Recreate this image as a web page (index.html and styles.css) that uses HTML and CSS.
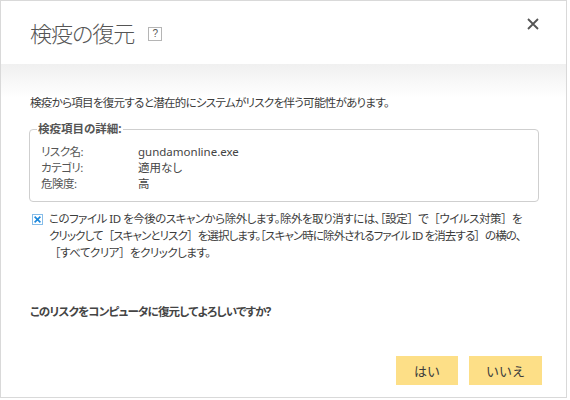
FILE: index.html
```html
<!DOCTYPE html>
<html lang="ja">
<head>
  <meta charset="UTF-8" />
  <title>検疫の復元</title>
  <link rel="stylesheet" href="styles.css">
</head>
<body>
  <div class="dialog">

    <!-- Header -->
    <div class="header">
      <h1 class="title">検疫の復元</h1>
      <span class="help">?</span>
      <button class="close" aria-label="閉じる">
        <svg width="12" height="12" viewBox="0 0 12 12">
          <path d="M1 1 L11 11 M11 1 L1 11" stroke="#555" stroke-width="1.8" fill="none"/>
        </svg>
      </button>
    </div>

    <!-- Body -->
    <div class="content">
      <p class="intro">検疫から項目を復元すると潜在的にシステムがリスクを伴う可能性があります。</p>

      <fieldset class="details">
        <legend>検疫項目の詳細:</legend>
        <div class="row"><span class="label">リスク名:</span><span class="value">gundamonline.exe</span></div>
        <div class="row"><span class="label">カテゴリ:</span><span class="value">適用なし</span></div>
        <div class="row"><span class="label">危険度:</span><span class="value">高</span></div>
      </fieldset>

      <div class="exclude">
        <span class="checkbox">
          <svg width="11" height="11" viewBox="0 0 11 11">
            <rect x="0.5" y="0.5" width="10" height="10" fill="#fff" stroke="#86bde9"/>
            <path d="M2.6 2.6 L8.4 8.4 M8.4 2.6 L2.6 8.4" stroke="#1a87dc" stroke-width="1.6" fill="none"/>
          </svg>
        </span>
        <p>
          <span class="line">このファイル ID を今後のスキャンから除外します。除外を取り消すには、<span class="bk">［</span>設定<span class="bk">］</span>で<span class="bk">［</span>ウイルス対策<span class="bk">］</span>を</span><br>
          <span class="line tight">クリックして<span class="bk">［</span>スキャンとリスク<span class="bk">］</span>を選択します。<span class="bk">［</span>スキャン時に除外されるファイル ID を消去する<span class="bk">］</span>の横の、</span><br>
          <span class="line"><span class="bk">［</span>すべてクリア<span class="bk">］</span>をクリックします。</span>
        </p>
      </div>

      <p class="question">このリスクをコンピュータに復元してよろしいですか?</p>

      <div class="actions">
        <button class="btn yes">はい</button>
        <button class="btn no">いいえ</button>
      </div>
    </div>

  </div>
</body>
</html>
```

FILE: styles.css
```css
body {
  margin: 0;
  background: #fff;
  font-family: "Noto Sans", "Noto Sans CJK JP", sans-serif;
  font-feature-settings: "palt";
  color: #3c3c3c;
}

.dialog {
  width: 567px;
  height: 398px;
  box-sizing: border-box;
  border: 1px solid #d9d9d9;
  display: flex;
  flex-direction: column;
  background: #fff;
}

.header {
  height: 63px;
  display: flex;
  align-items: center;
  padding: 0 29px;
}

.title {
  margin: 0;
  font-size: 22px;
  font-weight: 300;
  color: #555;
  letter-spacing: -1px;
  line-height: 1;
}

.help {
  width: 12px;
  height: 12px;
  border: 1px solid #b5b5b5;
  margin-left: 14px;
  margin-top: 3px;
  font-size: 10px;
  line-height: 12px;
  text-align: center;
  color: #555;
  font-family: "Liberation Sans", sans-serif;
}

.close {
  margin-left: auto;
  margin-right: -2px;
  margin-top: -17px;
  padding: 0;
  border: none;
  background: none;
  cursor: pointer;
  line-height: 0;
}

.content {
  flex: 1;
  display: flex;
  flex-direction: column;
  padding: 31px 27px 12px 29px;
  background: linear-gradient(#f0f0f0, #fff 34px);
}

.intro {
  margin: 0;
  font-size: 11.5px;
  line-height: 16px;
  letter-spacing: -0.7px;
}

.details {
  margin: 10px 0 0 -1px;
  padding: 6px 11px 10px;
  border: 1px solid #cfcfcf;
  border-radius: 4px;
}

.details legend {
  padding: 0 1px;
  margin-left: -4px;
  font-size: 11.5px;
  font-weight: bold;
  line-height: 16px;
  color: #555;
}

.row {
  display: flex;
  font-size: 11.5px;
  line-height: 15px;
  color: #555;
  padding-top: 1px;
}

.label {
  width: 97px;
  letter-spacing: -0.5px;
}

.value {
  color: #444;
}

.exclude {
  display: flex;
  margin-top: 8px;
  margin-left: 2px;
}

.checkbox {
  width: 11px;
  height: 11px;
  margin-top: 4px;
  margin-right: 6px;
  line-height: 0;
}

.exclude p {
  margin: 0;
  font-size: 11.5px;
  line-height: 17px;
  letter-spacing: -0.5px;
}

.line {
  white-space: nowrap;
}

.bk {
  font-feature-settings: normal;
}

.tight {
  letter-spacing: -0.9px;
}

.question {
  margin: 43px 0 0;
  font-size: 11.5px;
  font-weight: bold;
  line-height: 16px;
  color: #444;
  letter-spacing: -0.8px;
}

.actions {
  margin-top: auto;
  display: flex;
  justify-content: flex-end;
  gap: 11px;
  margin-right: -3px;
}

.btn {
  height: 29px;
  border: none;
  background: #fddf87;
  font-family: "Noto Sans CJK JP", sans-serif;
  font-size: 13px;
  color: #3c3c3c;
  padding: 0;
  cursor: pointer;
}

.yes {
  width: 62px;
}

.no {
  width: 73px;
}
```
